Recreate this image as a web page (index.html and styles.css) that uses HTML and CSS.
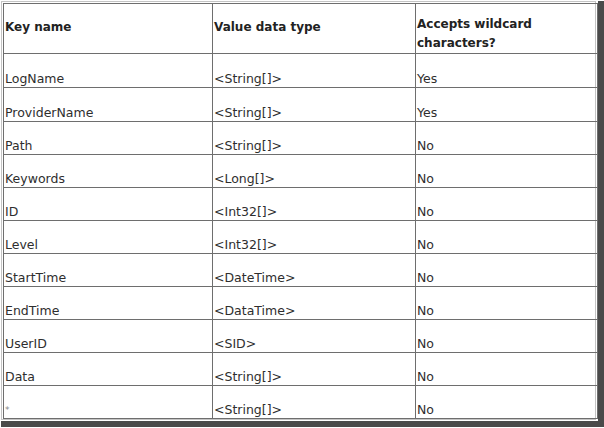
FILE: index.html
```html
<!DOCTYPE html>
<html>
<head>
<meta charset="utf-8">
<link rel="stylesheet" href="styles.css">
</head>
<body>
<div class="shot">
  <div class="frame">
    <table class="grid">
      <colgroup>
        <col class="c1">
        <col class="c2">
        <col class="c3">
      </colgroup>
      <thead>
        <tr class="head">
          <th>Key name</th>
          <th>Value data type</th>
          <th class="wrap">Accepts wildcard characters?</th>
        </tr>
      </thead>
      <tbody>
        <tr class="tall"><td>LogName</td><td>&lt;String[]&gt;</td><td>Yes</td></tr>
        <tr class="tall"><td>ProviderName</td><td>&lt;String[]&gt;</td><td>Yes</td></tr>
        <tr><td>Path</td><td>&lt;String[]&gt;</td><td>No</td></tr>
        <tr><td>Keywords</td><td>&lt;Long[]&gt;</td><td>No</td></tr>
        <tr><td>ID</td><td>&lt;Int32[]&gt;</td><td>No</td></tr>
        <tr><td>Level</td><td>&lt;Int32[]&gt;</td><td>No</td></tr>
        <tr><td>StartTime</td><td>&lt;DateTime&gt;</td><td>No</td></tr>
        <tr><td>EndTime</td><td>&lt;DataTime&gt;</td><td>No</td></tr>
        <tr><td>UserID</td><td>&lt;SID&gt;</td><td>No</td></tr>
        <tr><td>Data</td><td>&lt;String[]&gt;</td><td>No</td></tr>
        <tr><td class="star">*</td><td>&lt;String[]&gt;</td><td>No</td></tr>
      </tbody>
    </table>
  </div>
</div>
</body>
</html>
```
FILE: styles.css
```css
html, body {
  margin: 0;
  padding: 0;
  background: #ffffff;
}

.shot {
  margin: 1px 0 0 1px;
  width: 597px;
  height: 420px;
  border-right: 6px solid #4a4a4a;
  border-bottom: 6px solid #4a4a4a;
  box-sizing: content-box;
  background: #ffffff;
}

.frame {
  border: 1px solid #c4c4c4;
  padding: 0;
  width: 595px;
  height: 419px;
  box-sizing: border-box;
}

.grid {
  border-collapse: collapse;
  table-layout: fixed;
  width: 594px;
  margin: 1px 0 0 1px;
  font-family: "DejaVu Sans", Verdana, sans-serif;
  font-size: 12.5px;
  color: #2e2e2e;
}

.c1 { width: 209px; }
.c2 { width: 203px; }
.c3 { width: 182px; }

.grid th,
.grid td {
  border: 1px solid #6e6e6e;
  text-align: left;
  padding: 16px 2px 0 1px;
  line-height: 16px;
  vertical-align: top;
  height: 16px;
}

.grid tr.tall td {
  padding-top: 17px;
}

.grid th {
  font-weight: bold;
  font-size: 12px;
  color: #222222;
  padding-top: 14px;
  line-height: 19px;
  height: 35px;
}

.grid th.wrap {
  padding-top: 11px;
  height: 38px;
}

.star {
  font-size: 9px;
  color: #888888;
}
```
